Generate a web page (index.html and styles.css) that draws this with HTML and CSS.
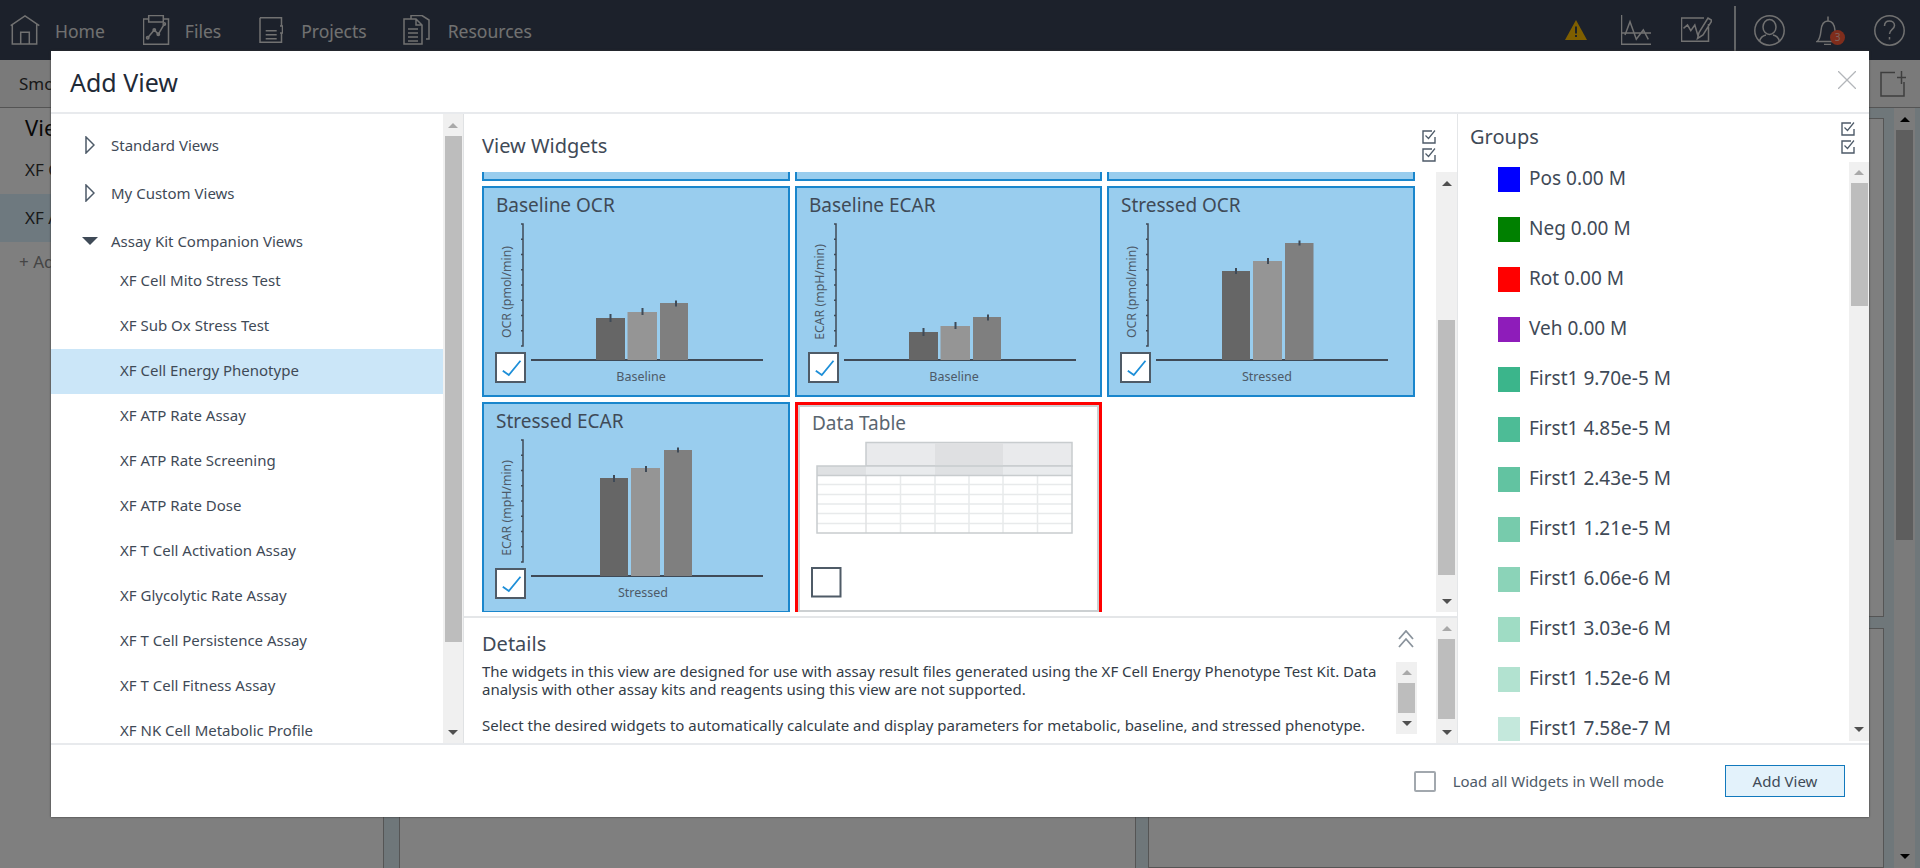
FILE: index.html

```html
<!DOCTYPE html>
<html>
  <head>
    <title>Add View</title>
    <link rel="stylesheet" href="styles.css">
  </head>
  <body>
    <svg class="defs" width="0" height="0">
      <symbol id="check-all" viewBox="0 0 14 14">
        <path d="M10 1H1v12h12V7" fill="none" stroke="currentColor" stroke-width="1.4"/>
        <path d="M3.5 5.5l3 3L13 0.5" fill="none" stroke="currentColor" stroke-width="1.2"/>
      </symbol>
      <symbol id="axis" viewBox="0 0 308 211">
        <path d="M39 38h2v122h-2M39 53.250h2M39 68.500h2M39 83.750h2M39 99h2M39 114.250h2M39 129.500h2M39 144.750h2" fill="none" stroke="#3f4a57" stroke-width="1.500"/>
        <path d="M49 174H281" stroke="#3f4a57" stroke-width="2"/>
      </symbol>
      <symbol id="tick" viewBox="0 0 30 30">
        <path d="M7.300 18.700L13.300 23 25 8.700" fill="none" stroke="#1e8fd8" stroke-width="1.800"/>
      </symbol>
    </svg>

    <div class="topbar">
      <a class="nav-item nav-home">
        <svg class="nav-icon" width="30" height="30" viewBox="10 15 30 30"><path d="M10.700 25.700L25 16l14.300 9.700M12.300 24.500V44h24.400V24.500M20.700 44V32.300h8.600V44"/></svg>
        <span>Home</span>
      </a>
      <a class="nav-item nav-files">
        <svg class="nav-icon" width="27" height="30" viewBox="142 15 27 30"><path d="M147.500 19h-5v25.200h25V19h-5M147.700 15.500h14.600V22h-14.600zM146.700 37.700l6.600-7.700 4 4.300 6-10.300"/><circle cx="146.700" cy="37.700" r="1.200"/><circle cx="153.300" cy="30" r="1.200"/><circle cx="157.300" cy="34.300" r="1.200"/><circle cx="163.300" cy="24" r="1.200"/></svg>
        <span>Files</span>
      </a>
      <a class="nav-item nav-projects">
        <svg class="nav-icon" width="24" height="27" viewBox="259 17 24 27"><path d="M260 17.700h21.500V26M281.500 33v9.300H260V17.700M265.700 30.700h11M265.700 34.700h11M265.700 38.700h11M280 26h2.500v7H280"/></svg>
        <span>Projects</span>
      </a>
      <a class="nav-item nav-resources">
        <svg class="nav-icon" width="28" height="30" viewBox="403 15 28 30"><path d="M404 19h12l6 6v19h-18zM416 19v6h6M411 19v-3.500h11l7 4.500v19h-3M408 29h10M408 33h10M408 37h10M408 41h10"/></svg>
        <span>Resources</span>
      </a>

      <div class="top-tools">
        <svg class="warn" width="22" height="20" viewBox="0 0 22 20"><path d="M11 0l11 20H0z" fill="#ffbf00"/><path d="M10 6.500h2v7h-2zM10 15h2v2h-2z" fill="#38424f"/></svg>
        <svg class="nav-icon tool-chart" width="31" height="30" viewBox="1622 15 31 30"><path d="M1622.500 15v29.300H1652M1622.500 33H1652M1626 35l5-13.300 6.300 17.600 7-9.300 5 9.300"/></svg>
        <svg class="nav-icon tool-edit" width="31" height="26" viewBox="1682 18 31 26"><path d="M1705 19h-22.500v23.300h27V25M1684.500 29.300l4-3.300 3.300 5.700 4-5.700 3.300 11.300M1698.500 39.500l1.500-6 9-14.500 4 2.500-9 14.500z"/></svg>
        <span class="top-sep"></span>
        <svg class="nav-icon tool-user" width="31" height="31" viewBox="0 0 31 31"><circle cx="15.500" cy="15.500" r="14.700"/><ellipse cx="15.500" cy="12" rx="6.500" ry="7.500"/><path d="M5.500 26.500c1-4.500 4-6 6.500-6.500M25.500 26.500c-1-4.500-4-6-6.500-6.500"/></svg>
        <span class="bell">
          <svg class="nav-icon" width="24" height="30" viewBox="0 0 24 30"><path d="M1 26.500c3-2 3.500-6 4-11 .5-6 3-9.500 7-9.500s6.500 3.500 7 9.500c.5 5 1 9 4 11zM12 6V1.500M8 29.500h7"/></svg>
          <b class="badge">3</b>
        </span>
        <svg class="nav-icon tool-help" width="31" height="31" viewBox="0 0 31 31"><circle cx="15.500" cy="15.500" r="14.700"/><path d="M10.500 11c0-3.500 2.500-5 5-5s5 1.500 5 4.500c0 3.800-5 4-5 8.500M15.500 22v2.500"/></svg>
      </div>
    </div>

    <div class="toolbar">
      <span class="crumb">Smo</span>
      <svg class="add-page" width="27" height="27" viewBox="0 0 27 27"><path d="M15 2.500H1v23.500h23V12M17 7.500h9M21.500 1v13" fill="none" stroke="#7d7d7d" stroke-width="1.500"/></svg>
    </div>

    <div class="workspace">
      <div class="side">
        <h2>Views</h2>
        <div class="side-row">XF Cell Mito</div>
        <div class="side-row active">XF ATP Rate</div>
        <div class="side-add">+ Add</div>
      </div>
      <div class="canvas"></div>
      <div class="canvas-right">
        <div class="canvas-box top"></div>
        <div class="canvas-box"></div>
      </div>
      <div class="sb sb-page"><i class="up"></i><b></b><i class="down"></i></div>
    </div>

    <div class="overlay"></div>

    <div class="modal">
      <div class="modal-head">
        <h1>Add View</h1>
        <svg class="close" width="18" height="18" viewBox="0 0 18 18"><path d="M0 0l18 18M18 0L0 18" stroke="#b3b6ba" stroke-width="1.300"/></svg>
      </div>

      <div class="modal-body">
        <div class="tree-pane">
          <div class="tree">
            <div class="tree-head">
              <svg width="10" height="18" viewBox="0 0 10 18"><path d="M1 1l8 8-8 8z" fill="none" stroke="#4d5a68" stroke-width="1.500"/></svg>
              Standard Views
            </div>
            <div class="tree-head">
              <svg width="10" height="18" viewBox="0 0 10 18"><path d="M1 1l8 8-8 8z" fill="none" stroke="#4d5a68" stroke-width="1.500"/></svg>
              My Custom Views
            </div>
            <div class="tree-head open">
              <svg width="16" height="8" viewBox="0 0 16 8"><path d="M0 0h16L8 8z" fill="#3f4a57"/></svg>
              Assay Kit Companion Views
            </div>
            <ul class="tree-list">
              <li>XF Cell Mito Stress Test</li>
              <li>XF Sub Ox Stress Test</li>
              <li class="selected">XF Cell Energy Phenotype</li>
              <li>XF ATP Rate Assay</li>
              <li>XF ATP Rate Screening</li>
              <li>XF ATP Rate Dose</li>
              <li>XF T Cell Activation Assay</li>
              <li>XF Glycolytic Rate Assay</li>
              <li>XF T Cell Persistence Assay</li>
              <li>XF T Cell Fitness Assay</li>
              <li>XF NK Cell Metabolic Profile</li>
            </ul>
          </div>
          <div class="sb sb-tree"><i class="up off"></i><b></b><i class="down"></i></div>
        </div>

        <div class="center-pane">
          <div class="widgets">
            <div class="widgets-head">
              <h3>View Widgets</h3>
              <div class="check-stack">
                <svg width="14" height="14"><use href="#check-all"/></svg>
                <svg width="14" height="14"><use href="#check-all"/></svg>
              </div>
            </div>
            <div class="widgets-body">
              <div class="grid-view">
                <div class="grid">
                  <div class="card stub"></div>
                  <div class="card stub"></div>
                  <div class="card stub"></div>

                  <div class="card">
                    <div class="card-title">Baseline OCR</div>
                    <svg class="chart" width="308" height="211" viewBox="0 0 308 211">
                      <use href="#axis" width="308" height="211"/>
                      <text class="ylab" transform="translate(29 106) rotate(-90)">OCR (pmol/min)</text>
                      <rect x="114" y="132" width="29" height="42" fill="#666"/>
                      <rect x="145.500" y="126" width="29.500" height="48" fill="#959595"/>
                      <rect x="178" y="117" width="28" height="57" fill="#7f7f7f"/>
                      <path class="err" d="M128.500 128v8M160.500 122v7M194 114.500v6"/>
                      <text class="xlab" x="159" y="195">Baseline</text>
                      <rect class="box" x="14" y="167" width="29" height="29"/>
                      <use href="#tick" x="13.500" y="166" width="30" height="30"/>
                    </svg>
                  </div>

                  <div class="card">
                    <div class="card-title">Baseline ECAR</div>
                    <svg class="chart" width="308" height="211" viewBox="0 0 308 211">
                      <use href="#axis" width="308" height="211"/>
                      <text class="ylab" transform="translate(29 106) rotate(-90)">ECAR (mpH/min)</text>
                      <rect x="114" y="146" width="29" height="28" fill="#666"/>
                      <rect x="145.500" y="140" width="29.500" height="34" fill="#959595"/>
                      <rect x="178" y="131" width="28" height="43" fill="#7f7f7f"/>
                      <path class="err" d="M128.500 142v8M160.500 136v7M193 128.500v6"/>
                      <text class="xlab" x="159" y="195">Baseline</text>
                      <rect class="box" x="14" y="167" width="29" height="29"/>
                      <use href="#tick" x="13.500" y="166" width="30" height="30"/>
                    </svg>
                  </div>

                  <div class="card">
                    <div class="card-title">Stressed OCR</div>
                    <svg class="chart" width="308" height="211" viewBox="0 0 308 211">
                      <use href="#axis" width="308" height="211"/>
                      <text class="ylab" transform="translate(29 106) rotate(-90)">OCR (pmol/min)</text>
                      <rect x="115" y="85" width="28" height="89" fill="#666"/>
                      <rect x="146" y="75" width="29" height="99" fill="#959595"/>
                      <rect x="178" y="57" width="28.500" height="117" fill="#7f7f7f"/>
                      <path class="err" d="M129 82v6M161 72v6M192.500 54.500v5"/>
                      <text class="xlab" x="160" y="195">Stressed</text>
                      <rect class="box" x="14" y="167" width="29" height="29"/>
                      <use href="#tick" x="13.500" y="166" width="30" height="30"/>
                    </svg>
                  </div>

                  <div class="card">
                    <div class="card-title">Stressed ECAR</div>
                    <svg class="chart" width="308" height="211" viewBox="0 0 308 211">
                      <use href="#axis" width="308" height="211"/>
                      <text class="ylab" transform="translate(29 106) rotate(-90)">ECAR (mpH/min)</text>
                      <rect x="118" y="76" width="28" height="98" fill="#666"/>
                      <rect x="149" y="66" width="29" height="108" fill="#959595"/>
                      <rect x="182" y="48" width="28" height="126" fill="#7f7f7f"/>
                      <path class="err" d="M132 73v7M164 64v6M196 45.500v5"/>
                      <text class="xlab" x="161" y="195">Stressed</text>
                      <rect class="box" x="14" y="167" width="29" height="29"/>
                      <use href="#tick" x="13.500" y="166" width="30" height="30"/>
                    </svg>
                  </div>

                  <div class="card flagged">
                    <div class="card-title">Data Table</div>
                    <svg class="chart" width="307" height="213" viewBox="0 0 307 213">
                      <rect x="71" y="40.500" width="206" height="23.500" fill="#e9eaec" stroke="#c8ccce" stroke-width="1.500"/>
                      <rect x="140" y="41" width="68" height="23" fill="#dfe0e2"/>
                      <rect x="22" y="64" width="255" height="67" fill="#fff"/>
                      <rect x="22" y="64" width="49" height="9" fill="#dfe1e3"/>
                      <rect x="71" y="64" width="206" height="9" fill="#e9ebed"/>
                      <rect x="140" y="64" width="68" height="9" fill="#dfe1e3"/>
                      <path d="M22 82.500h255M22 92.500h255M22 102h255M22 111.500h255M22 121.500h255M105.500 73v58M140 73v58M174 73v58M208 73v58M242.500 73v58" stroke="#e8eaeb" stroke-width="1.500" fill="none"/>
                      <path d="M71 73v58" stroke="#e0e2e3" stroke-width="1.500"/>
                      <rect x="22" y="64" width="255" height="67" fill="none" stroke="#c8ccce" stroke-width="1.500"/>
                      <path d="M22 73.500h255" stroke="#c8ccce" stroke-width="1.500"/>
                      <rect class="box" x="17" y="166" width="28.500" height="28.500"/>
                    </svg>
                  </div>
                </div>
              </div>
              <div class="sb sb-widgets"><i class="up"></i><b></b><i class="down"></i></div>
            </div>
          </div>

          <div class="details">
            <div class="details-main">
              <div class="details-head">
                <h3>Details</h3>
                <svg class="collapse" width="16" height="18" viewBox="0 0 16 18"><path d="M1 9l7-8 7 8M1 17l7-8 7 8" fill="none" stroke="#8a939c" stroke-width="1.800"/></svg>
              </div>
              <div class="details-row">
                <p class="details-text">The widgets in this view are designed for use with assay result files generated using the XF Cell Energy Phenotype Test Kit. Data<br>analysis with other assay kits and reagents using this view are not supported.<br><br>Select the desired widgets to automatically calculate and display parameters for metabolic, baseline, and stressed phenotype.</p>
                <div class="sb sb-text"><i class="up off"></i><b></b><i class="down"></i></div>
              </div>
            </div>
            <div class="sb sb-details"><i class="up off"></i><b></b><i class="down"></i></div>
          </div>
        </div>

        <div class="groups-pane">
          <div class="groups-head">
            <h3>Groups</h3>
            <div class="check-stack">
              <svg width="14" height="14"><use href="#check-all"/></svg>
              <svg width="14" height="14"><use href="#check-all"/></svg>
            </div>
          </div>
          <div class="groups-body">
            <ul class="group-list">
              <li><span class="swatch" style="background:#0000ff"></span>Pos 0.00 M</li>
              <li><span class="swatch" style="background:#008000"></span>Neg 0.00 M</li>
              <li><span class="swatch" style="background:#ff0000"></span>Rot 0.00 M</li>
              <li><span class="swatch" style="background:#8e1cba"></span>Veh 0.00 M</li>
              <li><span class="swatch" style="background:#3bb58b"></span>First1 9.70e-5 M</li>
              <li><span class="swatch" style="background:#4dbc96"></span>First1 4.85e-5 M</li>
              <li><span class="swatch" style="background:#62c3a1"></span>First1 2.43e-5 M</li>
              <li><span class="swatch" style="background:#77cbac"></span>First1 1.21e-5 M</li>
              <li><span class="swatch" style="background:#8bd3b8"></span>First1 6.06e-6 M</li>
              <li><span class="swatch" style="background:#9fdcc4"></span>First1 3.03e-6 M</li>
              <li><span class="swatch" style="background:#b2e2d0"></span>First1 1.52e-6 M</li>
              <li><span class="swatch" style="background:#c4e8dc"></span>First1 7.58e-7 M</li>
            </ul>
            <div class="sb sb-groups"><i class="up off"></i><b></b><i class="down"></i></div>
          </div>
        </div>
      </div>

      <div class="modal-foot">
        <label class="well-check"><span class="well-box"></span>Load all Widgets in Well mode</label>
        <button class="add-btn">Add View</button>
      </div>
    </div>
  </body>
</html>
```

FILE: styles.css

```css
* { box-sizing: border-box; }

html, body {
  margin: 0;
  height: 868px;
  overflow: hidden;
}

body {
  position: relative;
  font-family: "Noto Sans", "Open Sans", sans-serif;
  color: #3f4a57;
  background: #dfeef5;
}

h1, h2, h3, p, ul { margin: 0; padding: 0; font-weight: normal; }
ul { list-style: none; }
.defs { position: absolute; }

/* page behind the dialog */
.topbar {
  height: 60px;
  background: #384256;
  display: flex;
  align-items: flex-start;
  padding-left: 10px;
  color: #e2e2e2;
}
.nav-item {
  display: flex;
  align-items: center;
  height: 60px;
  font-size: 17.500px;
  gap: 15px;
}
.nav-item span { position: relative; top: 1px; }
.nav-home { margin-right: 38px; }
.nav-files { margin-right: 38px; }
.nav-projects { margin-right: 36px; gap: 18px; }
.nav-resources { gap: 17px; }
.nav-icon { fill: none; stroke: #e2e2e2; stroke-width: 1.500; }

.top-tools {
  margin-left: auto;
  display: flex;
  align-items: center;
  height: 60px;
}
.warn { margin-right: 34px; }
.tool-chart { margin-right: 29px; }
.tool-edit { margin-right: 22px; }
.top-sep {
  width: 2px;
  height: 54px;
  margin-top: 6px;
  background: #c4c8cc;
  margin-right: 18px;
}
.tool-user { margin-right: 31px; }
.bell { position: relative; margin-right: 34px; height: 30px; }
.badge {
  position: absolute;
  left: 14px;
  top: 14.500px;
  width: 15px;
  height: 15px;
  border-radius: 50%;
  background: #ff5a38;
  color: #ffc8bd;
  font-size: 10px;
  font-weight: normal;
  line-height: 15px;
  text-align: center;
}
.tool-help { margin-right: 15px; }

.toolbar {
  height: 48px;
  background: #f4f4f4;
  border-bottom: 1px solid #a8a8a8;
  display: flex;
  align-items: center;
  padding-left: 19px;
  padding-right: 13px;
  font-size: 17px;
  color: #333;
}
.add-page { margin-left: auto; }

.workspace {
  display: flex;
  height: 760px;
}
.side {
  width: 384px;
  background: #fff;
  border-right: 1px solid #aaa;
  font-size: 17px;
  color: #333;
}
.side h2 {
  font-size: 22px;
  height: 38px;
  line-height: 38px;
  padding-left: 25px;
  color: #111;
}
.side-row {
  height: 48px;
  line-height: 48px;
  padding-left: 25px;
}
.side-row.active { background: #dcf2ff; }
.side-add {
  font-size: 17px;
  padding-left: 19px;
  height: 40px;
  line-height: 40px;
  color: #8a8a8a;
}
.canvas {
  width: 737px;
  margin-left: 15px;
  background: #fff;
  border-left: 1px solid #aaa;
  border-right: 1px solid #aaa;
}
.canvas-right {
  width: 736px;
  margin-left: 12px;
  padding-top: 10px;
  display: flex;
  flex-direction: column;
  gap: 11px;
}
.canvas-box {
  background: #fff;
  border: 1px solid #aaa;
  flex: 1;
}
.canvas-box.top { flex: none; height: 499px; }

.overlay {
  position: absolute;
  inset: 0;
  background: rgba(0, 0, 0, .5);
}

/* scrollbars */
.sb {
  display: flex;
  flex-direction: column;
  align-items: center;
  flex: none;
  background: #f0f0f0;
}
.sb i {
  display: flex;
  align-items: center;
  justify-content: center;
  width: 100%;
  flex: none;
}
.sb i::before {
  content: "";
  border-left: 5px solid transparent;
  border-right: 5px solid transparent;
}
.sb .up::before { border-bottom: 5px solid #505050; }
.sb .up.off::before { border-bottom-color: #a9a9a9; }
.sb .down { margin-top: auto; }
.sb .down::before { border-top: 5px solid #505050; }
.sb b { display: block; width: 17px; background: #bdbdbd; }

.sb-page { width: 21px; margin-left: 10px; background: #f7f7f7; }
.sb-page i { height: 22px; }
.sb-page .up::before { border-bottom-color: #000; }
.sb-page .down { height: 24px; }
.sb-page .down::before { border-top-color: #000; }
.sb-page b { height: 410px; background: #bcbcbc; }

.sb-tree { width: 20px; }
.sb-tree i { height: 22px; }
.sb-tree b { height: 506px; }

.sb-widgets { width: 21px; }
.sb-widgets i { height: 22px; }
.sb-widgets b { margin-top: 126px; height: 255px; }

.sb-details { width: 21px; }
.sb-details i { height: 21px; }
.sb-details b { height: 80px; }

.sb-text { width: 21px; height: 72px; }
.sb-text i { height: 21px; }
.sb-text b { height: 30px; }

.sb-groups { width: 20px; height: 579px; }
.sb-groups i { height: 21px; }
.sb-groups .down { height: 24px; }
.sb-groups b { height: 123px; }

/* dialog */
.modal {
  position: absolute;
  left: 51px;
  top: 51px;
  width: 1818px;
  height: 766px;
  background: #fff;
  box-shadow: 0 0 2px #333;
  display: flex;
  flex-direction: column;
}
.modal-head {
  height: 63px;
  flex: none;
  display: flex;
  align-items: center;
  padding-left: 19px;
  padding-right: 13px;
  border-bottom: 2px solid #e8eaed;
}
.modal-head h1 {
  font-size: 25px;
  color: #1f2a37;
  margin-top: 1px;
}
.close { margin-left: auto; margin-top: -4px; }

.modal-body {
  display: flex;
  height: 629px;
  flex: none;
}
.tree-pane {
  width: 413px;
  flex: none;
  display: flex;
  border-right: 1px solid #e0e2e4;
}
.tree {
  flex: 1;
  height: 629px;
  overflow: hidden;
  font-size: 15px;
  color: #3f4a57;
}
.tree-head {
  height: 24px;
  margin-top: 24px;
  display: flex;
  align-items: center;
  padding-left: 34px;
  gap: 16px;
}
.tree-head:first-child { margin-top: 19px; }
.tree-head.open { padding-left: 31px; gap: 13px; }
.tree-list { padding-top: 6px; }
.tree-list li {
  height: 45px;
  line-height: 43px;
  padding-left: 69px;
}
.tree-list .selected { background: #cbe6f8; }

.center-pane {
  width: 993px;
  flex: none;
  display: flex;
  flex-direction: column;
}
h3 { font-size: 20px; color: #3f4a57; }

.widgets {
  height: 504px;
  flex: none;
  border-bottom: 2px solid #e4e6e8;
}
.widgets-head {
  height: 58px;
  display: flex;
  padding-left: 18px;
  padding-right: 21px;
  align-items: center;
  justify-content: space-between;
}
.widgets-head h3 { margin-top: 4px; }
.widgets-head .check-stack { margin-top: 5px; }
.check-stack {
  display: flex;
  flex-direction: column;
  gap: 4px;
  color: #4d5a68;
}
.check-stack svg { display: block; }
.widgets-body {
  display: flex;
  height: 440px;
  padding-left: 18px;
}
.grid-view {
  width: 954px;
  height: 440px;
  overflow: hidden;
}
.grid {
  display: grid;
  grid-template-columns: 308px 307px 308px;
  grid-template-rows: 9px 211px 211px;
  gap: 5px;
}
.card {
  position: relative;
  background: #99cdee;
  border: 2px solid #1a86cc;
  overflow: hidden;
}
.card.stub { border-top: none; }
.card.flagged {
  background: #fff;
  height: 213px;
  border: 3px solid #ff0000;
  box-shadow: inset 0 0 0 2px #ccd0d2;
}
.card-title {
  font-size: 19px;
  color: #3f4a57;
  line-height: 24px;
  padding: 5px 0 0 12px;
}
.flagged .card-title {
  color: #5a6670;
  padding: 6px 0 0 14px;
}
.chart {
  position: absolute;
  left: -2px;
  top: -2px;
}
.flagged .chart { left: -3px; top: -3px; }
.ylab {
  font-size: 12.300px;
  fill: #4d5a68;
  text-anchor: middle;
}
.xlab {
  font-size: 12.500px;
  fill: #4d5a68;
  text-anchor: middle;
}
.err { fill: none; stroke: #3f4a57; stroke-width: 2; }
.box { fill: #fff; stroke: #4f5b67; stroke-width: 2; }

.details {
  flex: 1;
  display: flex;
}
.details-main {
  width: 972px;
  padding-left: 18px;
}
.details-head {
  height: 44px;
  display: flex;
  align-items: center;
  padding-right: 22px;
  justify-content: space-between;
}
.details-head h3 { margin-top: 7px; }
.collapse { margin-top: -3px; }
.details-row { display: flex; }
.details-text {
  width: 914px;
  font-size: 15px;
  line-height: 18px;
  color: #333c47;
  white-space: nowrap;
}

.groups-pane {
  width: 412px;
  flex: none;
  border-left: 1px solid #e4e6e8;
}
.groups-head {
  height: 48px;
  display: flex;
  align-items: center;
  justify-content: space-between;
  padding-left: 12px;
  padding-right: 14px;
}
.groups-head h3 { margin-top: -4px; }
.groups-body {
  display: flex;
  height: 581px;
}
.group-list {
  flex: 1;
  padding: 5px 0 0 40px;
  overflow: hidden;
  font-size: 19px;
  height: 579px;
}
.group-list li {
  display: flex;
  align-items: flex-start;
  height: 25px;
  margin-bottom: 25px;
  gap: 9px;
  line-height: 22px;
}
.swatch {
  width: 22px;
  height: 25px;
  flex: none;
}

.modal-foot {
  flex: 1;
  display: flex;
  align-items: center;
  justify-content: flex-end;
  padding-right: 24px;
  border-top: 2px solid #e8eaed;
}
.well-check {
  display: flex;
  align-items: center;
  gap: 17px;
  font-size: 15px;
  color: #4d5a68;
  margin-right: 61px;
}
.well-box {
  width: 22px;
  height: 21px;
  border: 2.500px solid #a2a8ae;
  border-radius: 2px;
}
.add-btn {
  width: 120px;
  height: 32px;
  background: #e3f2fb;
  border: 1px solid #1279bd;
  font-family: inherit;
  font-size: 15px;
  color: #3f4a57;
  padding: 0;
}
```
